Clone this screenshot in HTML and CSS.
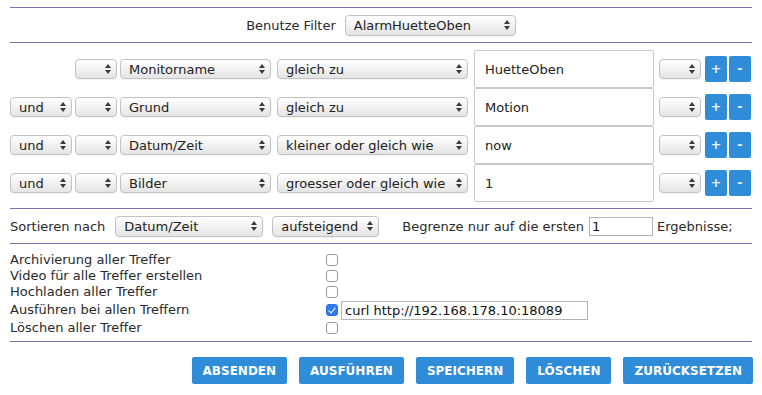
FILE: index.html
```html
<!DOCTYPE html>
<html lang="de">
<head>
<meta charset="utf-8">
<title>Filter</title>
<link rel="stylesheet" href="styles.css">
</head>
<body>
<div class="page">
  <hr class="rule">
  <div class="filter-row">
    <span class="lbl">Benutze Filter</span>
    <span class="sel w-filter"><select><option>AlarmHuetteOben</option></select></span>
  </div>
  <hr class="rule">
  <div class="terms">
    <div class="term">
      <span class="cell-op"></span>
      <span class="sel w-br"><select><option></option></select></span>
      <span class="sel w-field"><select><option>Monitorname</option></select></span>
      <span class="sel w-cmp"><select><option>gleich zu</option></select></span>
      <input class="val" type="text" value="HuetteOben">
      <span class="sel w-br2"><select><option></option></select></span>
      <span class="pm"><button class="sq">+</button><button class="sq">-</button></span>
    </div>
    <div class="term">
      <span class="sel w-op"><select><option>und</option></select></span>
      <span class="sel w-br"><select><option></option></select></span>
      <span class="sel w-field"><select><option>Grund</option></select></span>
      <span class="sel w-cmp"><select><option>gleich zu</option></select></span>
      <input class="val" type="text" value="Motion">
      <span class="sel w-br2"><select><option></option></select></span>
      <span class="pm"><button class="sq">+</button><button class="sq">-</button></span>
    </div>
    <div class="term">
      <span class="sel w-op"><select><option>und</option></select></span>
      <span class="sel w-br"><select><option></option></select></span>
      <span class="sel w-field"><select><option>Datum/Zeit</option></select></span>
      <span class="sel w-cmp"><select><option>kleiner oder gleich wie</option></select></span>
      <input class="val" type="text" value="now">
      <span class="sel w-br2"><select><option></option></select></span>
      <span class="pm"><button class="sq">+</button><button class="sq">-</button></span>
    </div>
    <div class="term">
      <span class="sel w-op"><select><option>und</option></select></span>
      <span class="sel w-br"><select><option></option></select></span>
      <span class="sel w-field"><select><option>Bilder</option></select></span>
      <span class="sel w-cmp"><select><option>groesser oder gleich wie</option></select></span>
      <input class="val" type="text" value="1">
      <span class="sel w-br2"><select><option></option></select></span>
      <span class="pm"><button class="sq">+</button><button class="sq">-</button></span>
    </div>
  </div>
  <hr class="rule">
  <div class="sort-row">
    <span class="lbl">Sortieren nach</span>
    <span class="sel w-sort"><select><option>Datum/Zeit</option></select></span>
    <span class="sel w-dir"><select><option>aufsteigend</option></select></span>
    <span class="lbl limit-lbl">Begrenze nur auf die ersten</span>
    <input class="small-in w-limit" type="text" value="1">
    <span class="lbl">Ergebnisse;</span>
  </div>
  <hr class="rule">
  <div class="actions">
    <div class="act"><span class="act-lbl">Archivierung aller Treffer</span><input class="cb" type="checkbox"></div>
    <div class="act"><span class="act-lbl">Video für alle Treffer erstellen</span><input class="cb" type="checkbox"></div>
    <div class="act"><span class="act-lbl">Hochladen aller Treffer</span><input class="cb" type="checkbox"></div>
    <div class="act tall"><span class="act-lbl">Ausführen bei allen Treffern</span><input class="cb" type="checkbox" checked><input class="small-in w-cmd" type="text" value="curl http://192.168.178.10:18089"></div>
    <div class="act"><span class="act-lbl">Löschen aller Treffer</span><input class="cb" type="checkbox"></div>
  </div>
  <hr class="rule">
  <div class="buttons">
    <button class="btn">ABSENDEN</button>
    <button class="btn">AUSFÜHREN</button>
    <button class="btn">SPEICHERN</button>
    <button class="btn">LÖSCHEN</button>
    <button class="btn">ZURÜCKSETZEN</button>
  </div>
</div>
</body>
</html>
```
FILE: styles.css
```css
* { box-sizing: border-box; }
html, body { margin: 0; padding: 0; background: #fff; }
body {
  font-family: "DejaVu Sans", Verdana, sans-serif;
  font-size: 13px;
  color: #2a2a2a;
}
.page { padding: 7px 10px 0 10px; width: 762px; }
.rule { border: 0; height: 1px; margin: 0; background: #7a74b3; }

.lbl { white-space: nowrap; }

/* select look-alike */
.sel { position: relative; display: inline-block; height: 20px; }
.sel select {
  -webkit-appearance: none;
  appearance: none;
  width: 100%;
  height: 100%;
  margin: 0;
  padding: 0 18px 0 8px;
  font: 13px "DejaVu Sans", Verdana, sans-serif;
  color: #222;
  border: 1px solid #c2c2c2;
  border-radius: 4px;
  background: linear-gradient(#ffffff, #f3f3f3 45%, #e4e4e4);
  box-shadow: 0 1px 0 rgba(0,0,0,0.04);
  outline: none;
}
.sel::before, .sel::after {
  content: "";
  position: absolute;
  right: 6px;
  top: 50%;
  width: 0; height: 0;
  border-left: 3px solid transparent;
  border-right: 3px solid transparent;
  pointer-events: none;
}
.sel::before { margin-top: -5px; border-bottom: 4px solid #3a3a3a; }
.sel::after { margin-top: 1px; border-top: 4px solid #3a3a3a; }

.filter-row {
  height: 34px;
  display: flex;
  align-items: center;
  justify-content: center;
  gap: 9px;
}
.filter-row .sel { height: 21px; }
.w-filter { width: 171px; }

/* filter terms */
.terms { padding: 7px 0 6px 0; }
.term { display: flex; align-items: center; height: 38px; }
.cell-op, .w-op { width: 62px; flex: none; }
.w-br { width: 42px; margin-left: 3px; }
.w-field { width: 151px; margin-left: 3px; }
.w-cmp { width: 191px; margin-left: 6px; }
.val {
  width: 180px;
  height: 38px;
  margin: 0 0 0 6px;
  padding: 0 10px;
  font: 13px "DejaVu Sans", Verdana, sans-serif;
  color: #222;
  border: 1px solid #c9c9c9;
  border-radius: 2px;
  background: #fff;
  outline: none;
}
.w-br2 { width: 42px; margin-left: 5px; }
.pm { display: flex; gap: 2px; margin-left: 4px; }
.sq {
  width: 22px;
  height: 26px;
  padding: 0;
  border: 0;
  border-radius: 2px;
  background: #2e8cd8;
  color: #e8f2fb;
  font: bold 13px "DejaVu Sans", Verdana, sans-serif;
  line-height: 26px;
}

/* sort row */
.sort-row { height: 34px; display: flex; align-items: center; }
.sort-row .sel { height: 21px; }
.w-sort { width: 148px; margin-left: 10px; }
.w-dir { width: 107px; margin-left: 9px; }
.limit-lbl { margin-left: 23px; }
.small-in {
  height: 19px;
  padding: 0 3px;
  font: 13px "DejaVu Sans", Verdana, sans-serif;
  color: #111;
  border: 1px solid #b4b4b4;
  border-radius: 0;
  background: #fff;
  outline: none;
}
.w-limit { width: 64px; margin: 0 4px 0 5px; padding-left: 2px; }

/* actions */
.actions { padding: 8px 0 5px 0; }
.act { display: flex; align-items: center; height: 16px; }
.act.tall { height: 20px; }
.act-lbl { width: 316px; white-space: nowrap; line-height: 16px; }
.cb {
  -webkit-appearance: none;
  appearance: none;
  position: relative;
  width: 12px;
  height: 12px;
  margin: 0;
  border: 1px solid #9a9a9a;
  border-radius: 3px;
  background: #fff;
}
.cb:checked { background: #2f7cf0; border-color: #2a70d8; }
.cb:checked::after {
  content: "";
  position: absolute;
  left: 3px;
  top: 1px;
  width: 3px;
  height: 6px;
  border-right: 1.6px solid #fff;
  border-bottom: 1.6px solid #fff;
  transform: rotate(40deg);
}
.w-cmd { width: 247px; margin-left: 3px; }

/* buttons */
.buttons {
  display: flex;
  justify-content: flex-end;
  gap: 12px;
  padding: 15px 0 0 0;
  margin-right: -1px;
}
.btn {
  height: 27px;
  padding: 0 11px;
  border: 0;
  border-radius: 2px;
  background: #2e8cd8;
  color: #fff;
  font: bold 12px "DejaVu Sans", Verdana, sans-serif;
  white-space: nowrap;
}
```
